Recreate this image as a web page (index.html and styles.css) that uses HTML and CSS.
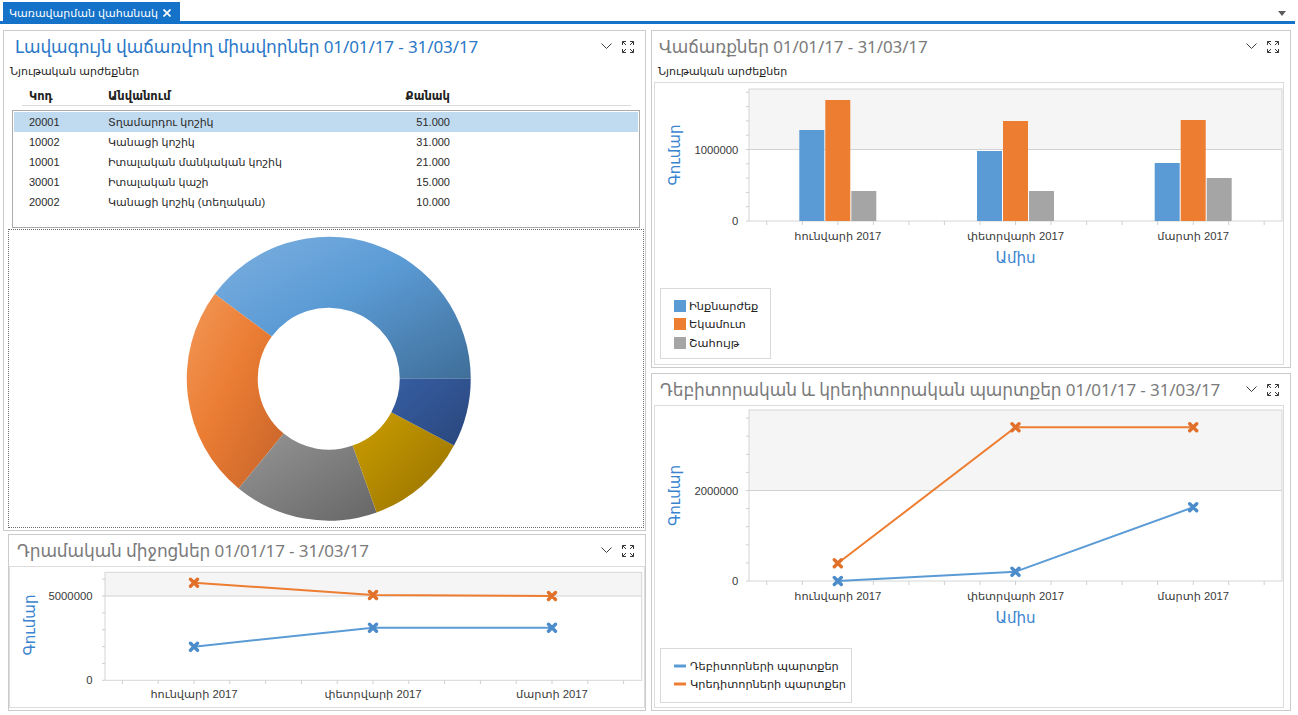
FILE: index.html
```html
<!DOCTYPE html>
<html lang="hy">
<head>
<meta charset="utf-8">
<title>Կառավարման վահանակ</title>
<link rel="stylesheet" href="styles.css">
</head>
<body>
<div class="tabbar">
  <div class="tab">
    <span class="tab-label">Կառավարման վահանակ</span>
    <svg class="tab-close" width="8" height="8" viewBox="0 0 8 8"><path d="M0.5 0.5L7.5 7.5M7.5 0.5L0.5 7.5"/></svg>
  </div>
  <div class="tab-menu"></div>
</div>

<main class="dashboard">
  <div class="col col-left">
    <section class="panel panel-top">
      <header class="panel-head head-top">
        <h2 class="panel-title title-blue">Լավագույն վաճառվող միավորներ 01/01/17 - 31/03/17</h2>
        <div class="tools">
          <svg class="ico-chev" width="11" height="7" viewBox="0 0 11 7"><path d="M0.5 0.5L5.5 5.5L10.5 0.5"/></svg>
          <svg class="ico-exp" width="12" height="12" viewBox="0 0 12 12"><path d="M0.5 4V0.5H4M0.5 0.5L4 4M8 0.5H11.5V4M11.5 0.5L8 4M0.5 8V11.5H4M0.5 11.5L4 8M11.5 8V11.5H8M11.5 11.5L8 8"/></svg>
        </div>
      </header>
      <div class="subtitle">Նյութական արժեքներ</div>
      <div class="grid-head">
        <span class="c-code">Կոդ</span><span class="c-name">Անվանում</span><span class="c-qty">Քանակ</span>
      </div>
      <div class="grid-body">
        <div class="row sel"><span class="c-code">20001</span><span class="c-name">Տղամարդու կոշիկ</span><span class="c-qty">51.000</span></div>
        <div class="row"><span class="c-code">10002</span><span class="c-name">Կանացի կոշիկ</span><span class="c-qty">31.000</span></div>
        <div class="row"><span class="c-code">10001</span><span class="c-name">Իտալական մանկական կոշիկ</span><span class="c-qty">21.000</span></div>
        <div class="row"><span class="c-code">30001</span><span class="c-name">Իտալական կաշի</span><span class="c-qty">15.000</span></div>
        <div class="row"><span class="c-code">20002</span><span class="c-name">Կանացի կոշիկ (տեղական)</span><span class="c-qty">10.000</span></div>
      </div>
      <div class="pie-box">
        <svg class="pie" width="635" height="297" viewBox="0 0 635 297">
          <defs>
            <linearGradient id="gBlue" x1="0" y1="0" x2="1" y2="1"><stop offset="0" stop-color="#7DB0E0"/><stop offset="0.45" stop-color="#5B9BD5"/><stop offset="1" stop-color="#3F6E98"/></linearGradient>
            <linearGradient id="gOrange" x1="0" y1="0" x2="1" y2="1"><stop offset="0" stop-color="#F29858"/><stop offset="0.45" stop-color="#EB7D33"/><stop offset="1" stop-color="#C4622A"/></linearGradient>
            <linearGradient id="gGrey" x1="0" y1="0" x2="1" y2="1"><stop offset="0" stop-color="#969696"/><stop offset="1" stop-color="#666666"/></linearGradient>
            <linearGradient id="gGold" x1="0" y1="0" x2="1" y2="1"><stop offset="0" stop-color="#CC9E00"/><stop offset="1" stop-color="#957000"/></linearGradient>
            <linearGradient id="gNavy" x1="0" y1="0" x2="1" y2="1"><stop offset="0" stop-color="#375EA2"/><stop offset="1" stop-color="#29467C"/></linearGradient>
          </defs>
          <path fill="url(#gBlue)" d="M461.75 148.7A142 142 0 0 0 205.71 64.1L262.73 106.4A71 71 0 0 1 390.75 148.7Z"/>
          <path fill="url(#gOrange)" d="M205.71 64.1A142 142 0 0 0 229.67 258.47L274.71 203.58A71 71 0 0 1 262.73 106.4Z"/>
          <path fill="url(#gGrey)" d="M229.67 258.47A142 142 0 0 0 367.59 282.39L343.67 215.55A71 71 0 0 1 274.71 203.58Z"/>
          <path fill="url(#gGold)" d="M367.59 282.39A142 142 0 0 0 444.98 215.62L382.36 182.16A71 71 0 0 1 343.67 215.55Z"/>
          <path fill="url(#gNavy)" d="M444.98 215.62A142 142 0 0 0 461.75 148.7L390.75 148.7A71 71 0 0 1 382.36 182.16Z"/>
        </svg>
      </div>
    </section>

    <section class="panel panel-cash">
      <header class="panel-head head-short">
        <h2 class="panel-title">Դրամական միջոցներ 01/01/17 - 31/03/17</h2>
        <div class="tools">
          <svg class="ico-chev" width="11" height="7" viewBox="0 0 11 7"><path d="M0.5 0.5L5.5 5.5L10.5 0.5"/></svg>
          <svg class="ico-exp" width="12" height="12" viewBox="0 0 12 12"><path d="M0.5 4V0.5H4M0.5 0.5L4 4M8 0.5H11.5V4M11.5 0.5L8 4M0.5 8V11.5H4M0.5 11.5L4 8M11.5 8V11.5H8M11.5 11.5L8 8"/></svg>
        </div>
      </header>
      <div class="chart-box cash-box">
        <svg class="chart" width="634" height="140" viewBox="0 0 634 140">
          <rect class="band" x="95" y="5.3" width="536.7" height="23.7"/>
          <rect class="plot" x="95" y="5.3" width="536.7" height="108"/>
          <line class="grid" x1="95" y1="29" x2="631.7" y2="29"/>
          <path class="tick" d="M92 113.3H95M92 96.4H95M92 79.6H95M92 62.7H95M92 45.9H95M92 29H95M92 12.1H95"/>
          <path class="tick" d="M112.4 113.3V117M148.2 113.3V117M184 113.3V117M219.8 113.3V117M255.6 113.3V117M291.4 113.3V117M327.2 113.3V117M363 113.3V117M398.8 113.3V117M434.6 113.3V117M470.4 113.3V117M506.2 113.3V117M542 113.3V117M577.8 113.3V117M613.6 113.3V117"/>
          <text class="ylab" x="82.5" y="33">5000000</text>
          <text class="ylab" x="82.5" y="117">0</text>
          <text class="xlab" x="184" y="131">հունվարի 2017</text>
          <text class="xlab" x="363" y="131">փետրվարի 2017</text>
          <text class="xlab" x="542" y="131">մարտի 2017</text>
          <text class="axt" transform="translate(25 58) rotate(-90)">Գումար</text>
          <polyline class="ln ln-o" points="184,15.7 363,28 542,29"/>
          <polyline class="ln ln-b" points="184,79.7 363,60.7 542,60.7"/>
          <path class="mk mk-o" d="M180.5 12.2L187.5 19.2M180.5 19.2L187.5 12.2M359.5 24.5L366.5 31.5M359.5 31.5L366.5 24.5M538.5 25.5L545.5 32.5M538.5 32.5L545.5 25.5"/>
          <path class="mk mk-b" d="M180.5 76.2L187.5 83.2M180.5 83.2L187.5 76.2M359.5 57.2L366.5 64.2M359.5 64.2L366.5 57.2M538.5 57.2L545.5 64.2M538.5 64.2L545.5 57.2"/>
        </svg>
      </div>
    </section>
  </div>

  <div class="col col-right">
    <section class="panel panel-sales">
      <header class="panel-head head-top">
        <h2 class="panel-title">Վաճառքներ 01/01/17 - 31/03/17</h2>
        <div class="tools">
          <svg class="ico-chev" width="11" height="7" viewBox="0 0 11 7"><path d="M0.5 0.5L5.5 5.5L10.5 0.5"/></svg>
          <svg class="ico-exp" width="12" height="12" viewBox="0 0 12 12"><path d="M0.5 4V0.5H4M0.5 0.5L4 4M8 0.5H11.5V4M11.5 0.5L8 4M0.5 8V11.5H4M0.5 11.5L4 8M11.5 8V11.5H8M11.5 11.5L8 8"/></svg>
        </div>
      </header>
      <div class="subtitle">Նյութական արժեքներ</div>
      <div class="chart-box sales-box">
        <svg class="chart" width="628" height="281" viewBox="0 0 628 281">
          <rect class="band" x="94" y="6" width="533" height="60.5"/>
          <rect class="plot" x="94" y="6" width="533" height="132"/>
          <line class="grid" x1="94" y1="66.5" x2="627" y2="66.5"/>
          <path class="tick" d="M91 138H94M91 123.7H94M91 109.4H94M91 95.1H94M91 80.8H94M91 66.5H94M91 52.2H94M91 37.9H94M91 23.6H94M91 9.3H94"/>
          <path class="tick" d="M111.8 138V142M147.3 138V142M182.8 138V142M218.4 138V142M253.9 138V142M289.4 138V142M325 138V142M360.5 138V142M396 138V142M431.6 138V142M467.1 138V142M502.6 138V142M538.2 138V142M573.7 138V142M609.2 138V142"/>
          <rect class="bar-b" x="144.3" y="47" width="25" height="91"/>
          <rect class="bar-o" x="170.3" y="17" width="25" height="121"/>
          <rect class="bar-g" x="196.3" y="108" width="25" height="30"/>
          <rect class="bar-b" x="322" y="68" width="25" height="70"/>
          <rect class="bar-o" x="348" y="38" width="25" height="100"/>
          <rect class="bar-g" x="374" y="108" width="25" height="30"/>
          <rect class="bar-b" x="499.7" y="80" width="25" height="58"/>
          <rect class="bar-o" x="525.7" y="37" width="25" height="101"/>
          <rect class="bar-g" x="551.7" y="95" width="25" height="43"/>
          <text class="ylab" x="83.4" y="70.5">1000000</text>
          <text class="ylab" x="83.4" y="142">0</text>
          <text class="xlab" x="182.8" y="157">հունվարի 2017</text>
          <text class="xlab" x="360.5" y="157">փետրվարի 2017</text>
          <text class="xlab" x="538.2" y="157">մարտի 2017</text>
          <text class="axt axt-x" x="360.5" y="180">Ամիս</text>
          <text class="axt" transform="translate(25 72) rotate(-90)">Գումար</text>
          <rect class="legend" x="5.5" y="205.5" width="110" height="70"/>
          <rect class="bar-b" x="19" y="217" width="12" height="12"/>
          <rect class="bar-o" x="19" y="235" width="12" height="12"/>
          <rect class="bar-g" x="19" y="254" width="12" height="12"/>
          <text class="leg" x="34" y="227">Ինքնարժեք</text>
          <text class="leg" x="34" y="245">Եկամուտ</text>
          <text class="leg" x="34" y="264">Շահույթ</text>
        </svg>
      </div>
    </section>

    <section class="panel panel-debt">
      <header class="panel-head head-short">
        <h2 class="panel-title">Դեբիտորական և կրեդիտորական պարտքեր 01/01/17 - 31/03/17</h2>
        <div class="tools">
          <svg class="ico-chev" width="11" height="7" viewBox="0 0 11 7"><path d="M0.5 0.5L5.5 5.5L10.5 0.5"/></svg>
          <svg class="ico-exp" width="12" height="12" viewBox="0 0 12 12"><path d="M0.5 4V0.5H4M0.5 0.5L4 4M8 0.5H11.5V4M11.5 0.5L8 4M0.5 8V11.5H4M0.5 11.5L4 8M11.5 8V11.5H8M11.5 11.5L8 8"/></svg>
        </div>
      </header>
      <div class="chart-box debt-box">
        <svg class="chart" width="628" height="301" viewBox="0 0 628 301">
          <rect class="band" x="94" y="4" width="533" height="80.5"/>
          <rect class="plot" x="94" y="4" width="533" height="171"/>
          <line class="grid" x1="94" y1="84.5" x2="627" y2="84.5"/>
          <path class="tick" d="M91 175H94M91 156.9H94M91 138.8H94M91 120.7H94M91 102.6H94M91 84.5H94M91 66.4H94M91 48.3H94M91 30.2H94M91 12.1H94"/>
          <path class="tick" d="M111.8 175V179M147.3 175V179M182.8 175V179M218.4 175V179M253.9 175V179M289.4 175V179M325 175V179M360.5 175V179M396 175V179M431.6 175V179M467.1 175V179M502.6 175V179M538.2 175V179M573.7 175V179M609.2 175V179"/>
          <text class="ylab" x="83.4" y="88.5">2000000</text>
          <text class="ylab" x="83.4" y="179">0</text>
          <text class="xlab" x="182.8" y="194">հունվարի 2017</text>
          <text class="xlab" x="360.5" y="194">փետրվարի 2017</text>
          <text class="xlab" x="538.2" y="194">մարտի 2017</text>
          <text class="axt axt-x" x="360.5" y="217">Ամիս</text>
          <text class="axt" transform="translate(25 89.5) rotate(-90)">Գումար</text>
          <polyline class="ln ln-o" points="182.8,157.3 360.5,21.3 538.2,21.3"/>
          <polyline class="ln ln-b" points="182.8,175 360.5,165.7 538.2,101.3"/>
          <path class="mk mk-o" d="M179.3 153.8L186.3 160.8M179.3 160.8L186.3 153.8M357 17.8L364 24.8M357 24.8L364 17.8M534.7 17.8L541.7 24.8M534.7 24.8L541.7 17.8"/>
          <path class="mk mk-b" d="M179.3 171.5L186.3 178.5M179.3 178.5L186.3 171.5M357 162.2L364 169.2M357 169.2L364 162.2M534.7 97.8L541.7 104.8M534.7 104.8L541.7 97.8"/>
          <rect class="legend" x="5.5" y="242.5" width="191" height="54"/>
          <line class="ln ln-b leg-line" x1="19" y1="260" x2="31" y2="260"/>
          <line class="ln ln-o leg-line" x1="19" y1="278" x2="31" y2="278"/>
          <text class="leg" x="35" y="264">Դեբիտորների պարտքեր</text>
          <text class="leg" x="35" y="282">Կրեդիտորների պարտքեր</text>
        </svg>
      </div>
    </section>
  </div>
</main>
</body>
</html>
```

FILE: styles.css
```css
* {
  box-sizing: border-box;
}

html,
body {
  margin: 0;
  padding: 0;
  background: #ffffff;
}

body {
  width: 1298px;
  height: 715px;
  overflow: hidden;
  font-family: "Liberation Sans", "DejaVu Sans", sans-serif;
  font-size: 12px;
  color: #1e1e1e;
}

/* ---------- tab strip ---------- */
.tabbar {
  width: 1295px;
  height: 24px;
  border-bottom: 3px solid #1472c8;
  display: flex;
  align-items: flex-end;
  padding-left: 3px;
}

.tab {
  width: 177px;
  height: 19px;
  background: #1472c8;
  color: #ffffff;
  display: flex;
  align-items: center;
  padding: 2px 9px 0 6px;
  font-size: 11px;
  line-height: 14px;
}

.tab-label {
  white-space: nowrap;
}

.tab-close {
  margin-left: auto;
  flex: none;
  stroke: #ffffff;
  stroke-width: 1.7;
  fill: none;
}

.tab-menu {
  margin-left: auto;
  margin-right: 9px;
  margin-bottom: 5px;
  width: 0;
  height: 0;
  border-left: 4px solid transparent;
  border-right: 4px solid transparent;
  border-top: 5px solid #5c5c5c;
}

/* ---------- dashboard layout ---------- */
.dashboard {
  display: grid;
  grid-template-columns: 643px 640px;
  column-gap: 5px;
  padding: 6px 0 0 3px;
}

.col {
  display: flex;
  flex-direction: column;
}

.panel {
  border: 1px solid #cbcbcb;
  background: #ffffff;
  display: flex;
  flex-direction: column;
}

.panel-top {
  height: 501px;
}

.panel-cash {
  height: 177px;
  margin-top: 3px;
  margin-left: 5px;
  padding-bottom: 2px;
}

.panel-sales {
  height: 338px;
  padding-bottom: 2px;
}

.panel-debt {
  height: 338px;
  margin-top: 5px;
  padding-bottom: 2px;
}

.panel-head {
  display: flex;
  align-items: center;
  height: 32px;
  padding-left: 8px;
  flex: none;
}

.head-short {
  height: 31px;
}

.panel-top .panel-head {
  padding-left: 11px;
}

.panel-sales .panel-head {
  padding-left: 7px;
}

.panel-title {
  margin: 0;
  font-family: "Noto Sans", "DejaVu Sans", sans-serif;
  font-weight: normal;
  font-size: 17px;
  letter-spacing: -0.1px;
  line-height: 22px;
  color: #7b7b7b;
  white-space: nowrap;
}

.title-blue {
  color: #2a78c8;
}

.tools {
  margin-left: auto;
  padding-right: 11px;
  display: flex;
  align-items: center;
  gap: 10px;
}

.ico-chev,
.ico-exp {
  fill: none;
  stroke: #3a3a3a;
  stroke-width: 1;
}

.ico-chev {
  margin-top: -1px;
}

.subtitle {
  height: 17px;
  line-height: 17px;
  padding-left: 6px;
  font-size: 11px;
  color: #1e1e1e;
  flex: none;
}

/* ---------- grid ---------- */
.grid-head,
.row {
  display: grid;
  grid-template-columns: 79px 243px 99px;
}

.grid-head {
  margin: 7px 14px 0 18px;
  height: 19px;
  padding-left: 7px;
  border-bottom: 1px solid #dadada;
  font-weight: bold;
  font-size: 11.5px;
  line-height: 18px;
  color: #222222;
}

.c-qty {
  text-align: right;
}

.grid-body {
  margin: 4px 5px 0 8px;
  height: 118px;
  border: 1px solid #ababab;
  padding: 1px;
}

.row {
  height: 20px;
  line-height: 21px;
  padding-left: 15px;
  font-size: 11px;
  color: #2a2a2a;
}

.row.sel {
  background: #c0daef;
}

.pie-box {
  margin: 1px 1px 0 4px;
  height: 299px;
  border: 1px dotted #6a6a6a;
}

.pie {
  display: block;
}

/* ---------- charts ---------- */
.chart-box {
  border: 1px solid #dcdcdc;
  flex: none;
}

.sales-box {
  margin: 2px 6px 0 2px;
  height: 283px;
}

.debt-box {
  margin: 0 6px 0 2px;
  height: 303px;
}

.cash-box {
  margin: 0;
  height: 142px;
}

.chart {
  display: block;
}

.chart text {
  font-family: "Liberation Sans", "DejaVu Sans", sans-serif;
  font-size: 11.3px;
  fill: #3a3a3a;
}

.chart .ylab {
  text-anchor: end;
}

.chart .xlab {
  text-anchor: middle;
}

.chart .axt {
  font-family: "DejaVu Sans", sans-serif;
  font-size: 15px;
  fill: #3a84cf;
  text-anchor: middle;
}

.chart .leg {
  fill: #222222;
}

.band {
  fill: #f5f5f5;
}

.plot {
  fill: none;
  stroke: #d6d6d6;
  stroke-width: 1;
}

.grid {
  stroke: #d2d2d2;
  stroke-width: 1;
}

.tick {
  stroke: #cfcfcf;
  stroke-width: 1;
  fill: none;
}

.bar-b {
  fill: #5b9bd5;
}

.bar-o {
  fill: #ed7d31;
}

.bar-g {
  fill: #a5a5a5;
}

.legend {
  fill: #ffffff;
  stroke: #d9d9d9;
  stroke-width: 1;
}

.ln {
  fill: none;
  stroke-width: 2;
}

.ln-o {
  stroke: #ed7d31;
}

.ln-b {
  stroke: #5b9bd5;
}

.leg-line {
  stroke-width: 3;
}

.mk {
  fill: none;
  stroke-width: 3.4;
  stroke-linecap: round;
}

.mk-o {
  stroke: #e0702a;
}

.mk-b {
  stroke: #4c8ccb;
}
```
